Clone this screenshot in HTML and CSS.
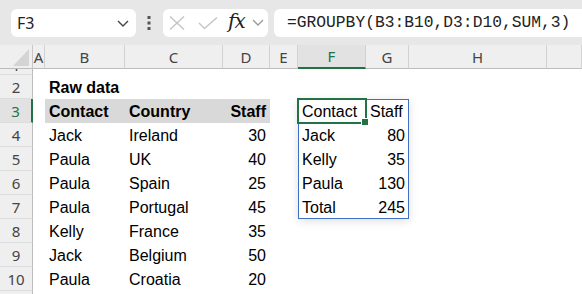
FILE: index.html
```html
<!DOCTYPE html>
<html lang="en">
<head>
<meta charset="UTF-8">
<title>GROUPBY</title>
<link rel="stylesheet" href="styles.css">
</head>
<body>
  <div class="toolbar">
    <div class="namebox">
      <span>F3</span>
      <svg class="chev" width="12" height="7" viewBox="0 0 12 7"><path d="M1 1l5 5 5-5" fill="none" stroke="#444" stroke-width="1.4"/></svg>
    </div>
    <svg class="grip" width="4" height="14" viewBox="0 0 4 14"><rect x="0.5" y="0" width="3" height="3" fill="#555"/><rect x="0.5" y="5.5" width="3" height="3" fill="#555"/><rect x="0.5" y="11" width="3" height="3" fill="#555"/></svg>
    <div class="fxbox">
      <svg width="16" height="14" viewBox="0 0 16 14"><path d="M1 0.5l14 13M15 0.5l-14 13" stroke="#c4c4c4" stroke-width="1.4" fill="none"/></svg>
      <svg width="20" height="12" viewBox="0 0 20 12"><path d="M1 6l5.5 5.5L19 0.5" stroke="#c4c4c4" stroke-width="1.4" fill="none"/></svg>
      <span class="fx">fx</span>
      <svg width="12" height="7" viewBox="0 0 12 7"><path d="M1 1l5 5 5-5" fill="none" stroke="#999" stroke-width="1.3"/></svg>
    </div>
    <div class="formula">=GROUPBY(B3:B10,D3:D10,SUM,3)</div>
  </div>

  <div class="sheet">
    <!-- column headers -->
    <div class="corner"><div class="tri"></div></div>
    <div class="ch">A</div><div class="ch">B</div><div class="ch">C</div><div class="ch">D</div>
    <div class="ch">E</div><div class="ch sel">F</div><div class="ch">G</div><div class="ch">H</div><div class="ch"></div>

    <!-- row 1 (scrolled) -->
    <div class="rh first"><span>1</span></div>
    <div></div><div></div><div></div><div></div><div></div><div></div><div></div><div></div><div></div>

    <div class="rh">2</div>
    <div class="c"></div><div class="c b">Raw data</div><div class="c"></div><div class="c"></div>
    <div class="c"></div><div class="c"></div><div class="c"></div><div class="c"></div><div class="c"></div>

    <div class="rh sel">3</div>
    <div class="c"></div><div class="c b hd">Contact</div><div class="c b hd">Country</div><div class="c b hd r">Staff</div>
    <div class="c"></div><div class="c">Contact</div><div class="c">Staff</div><div class="c"></div><div class="c"></div>

    <div class="rh">4</div>
    <div class="c"></div><div class="c">Jack</div><div class="c">Ireland</div><div class="c r">30</div>
    <div class="c"></div><div class="c">Jack</div><div class="c r">80</div><div class="c"></div><div class="c"></div>

    <div class="rh">5</div>
    <div class="c"></div><div class="c">Paula</div><div class="c">UK</div><div class="c r">40</div>
    <div class="c"></div><div class="c">Kelly</div><div class="c r">35</div><div class="c"></div><div class="c"></div>

    <div class="rh">6</div>
    <div class="c"></div><div class="c">Paula</div><div class="c">Spain</div><div class="c r">25</div>
    <div class="c"></div><div class="c">Paula</div><div class="c r">130</div><div class="c"></div><div class="c"></div>

    <div class="rh">7</div>
    <div class="c"></div><div class="c">Paula</div><div class="c">Portugal</div><div class="c r">45</div>
    <div class="c"></div><div class="c">Total</div><div class="c r">245</div><div class="c"></div><div class="c"></div>

    <div class="rh">8</div>
    <div class="c"></div><div class="c">Kelly</div><div class="c">France</div><div class="c r">35</div>
    <div class="c"></div><div class="c"></div><div class="c"></div><div class="c"></div><div class="c"></div>

    <div class="rh">9</div>
    <div class="c"></div><div class="c">Jack</div><div class="c">Belgium</div><div class="c r">50</div>
    <div class="c"></div><div class="c"></div><div class="c"></div><div class="c"></div><div class="c"></div>

    <div class="rh">10</div>
    <div class="c"></div><div class="c">Paula</div><div class="c">Croatia</div><div class="c r">20</div>
    <div class="c"></div><div class="c"></div><div class="c"></div><div class="c"></div><div class="c"></div>

    <div class="rh"></div>

    <!-- spill range and active cell sit over the cells -->
    <div class="spill"></div>
    <div class="active"></div>
  </div>
</body>
</html>
```

FILE: styles.css
```css
* {
  box-sizing: border-box;
}
body {
  margin: 0;
  width: 582px;
  height: 294px;
  overflow: hidden;
  background: #fff;
  font-family: "Liberation Sans", Arial, sans-serif;
}

/* formula bar */
.toolbar {
  height: 45px;
  background: #e7e7e7;
  display: flex;
  align-items: center;
  padding-left: 11px;
}
.namebox {
  width: 125px;
  height: 28px;
  background: #fff;
  border-radius: 6px;
  display: flex;
  align-items: center;
  justify-content: space-between;
  padding: 0 7px 0 6px;
  font-family: "Noto Sans", sans-serif;
  font-size: 16px;
  color: #222;
}
.namebox .chev {
  margin-top: 1px;
}
.grip {
  margin: 0 12px 0 11px;
}
.fxbox {
  width: 105px;
  height: 28px;
  background: #fff;
  border-radius: 6px;
  display: flex;
  align-items: center;
  padding-left: 6px;
}
.fxbox svg:nth-child(1) {
  margin-right: 13px;
}
.fxbox svg:nth-child(2) {
  margin-right: 10px;
}
.fx {
  font-family: "DejaVu Serif", serif;
  font-style: italic;
  font-size: 20px;
  color: #222;
  letter-spacing: -1px;
  margin-right: 7px;
  margin-top: -3px;
}
.formula {
  flex: 1;
  height: 28px;
  margin-left: 6px;
  margin-right: -12px;
  background: #fff;
  border-radius: 6px;
  display: flex;
  align-items: center;
  padding-left: 13px;
  font-family: "Liberation Mono", monospace;
  font-size: 16.3px;
  color: #222;
  white-space: nowrap;
}

/* grid */
.sheet {
  position: relative;
  display: grid;
  grid-template-columns: 33px 12px 80px 98px 47px 28px 68px 43px 138px 1fr;
  grid-template-rows: 24px 6px repeat(9, 24px) 24px;
}
.corner {
  background: #efefef;
  border-right: 1px solid #c8c8c8;
  border-bottom: 1px solid #bcbcbc;
  display: flex;
  justify-content: flex-end;
  align-items: flex-end;
  padding: 0 3px 2px 0;
}
.tri {
  width: 16px;
  height: 17px;
  background: #d4d4d4;
  clip-path: polygon(100% 0, 100% 100%, 0 100%);
}
.ch {
  background: #efefef;
  border-right: 1px solid #d2d2d2;
  border-bottom: 1px solid #bcbcbc;
  display: flex;
  align-items: center;
  justify-content: center;
  font-family: "Noto Sans", sans-serif;
  font-size: 15px;
  color: #444;
}
.ch.sel {
  background: #e2e2e2;
  color: #217346;
  border-bottom: 2px solid #217346;
}
.rh {
  background: #efefef;
  border-right: 1px solid #bcbcbc;
  border-bottom: 1px solid #dcdcdc;
  display: flex;
  align-items: center;
  justify-content: center;
  font-family: "Noto Sans", sans-serif;
  font-size: 15px;
  color: #444;
}
.rh.first {
  align-items: flex-start;
  overflow: hidden;
}
.rh.first span {
  line-height: 16px;
  margin-top: -12px;
}
.rh.sel {
  background: #e2e2e2;
  color: #217346;
  border-right: 2px solid #217346;
}

.c {
  display: flex;
  align-items: flex-end;
  padding: 0 4px 2px 4px;
  font-size: 16px;
  color: #000;
  white-space: nowrap;
}
.c.r {
  justify-content: flex-end;
}
.c.b {
  font-weight: bold;
}
.c.hd {
  background: #d9d9d9;
}

/* spilled GROUPBY result, laid over F3:G7 */
.spill {
  position: absolute;
  inset: 0;
  grid-column: 7 / 9;
  grid-row: 4 / 9;
  border: 1px solid #3f6fc2;
  box-shadow: 0 2px 9px rgba(0, 0, 0, 0.13);
}
.active {
  position: absolute;
  inset: -1px;
  grid-column: 7 / 8;
  grid-row: 4 / 5;
  border: 2px solid #217346;
}
.active::after {
  content: "";
  position: absolute;
  right: -4px;
  bottom: -4px;
  width: 6px;
  height: 6px;
  background: #217346;
  border: 1px solid #fff;
}
```
